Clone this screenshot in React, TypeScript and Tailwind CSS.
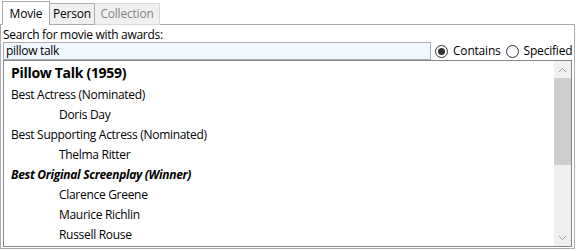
import React from "react";

const font = { fontFamily: '"Segoe UI", "Open Sans", "Noto Sans", sans-serif' };

function Radio({ checked, label }: { checked: boolean; label: string }) {
  return (
    <div className="flex items-center gap-[5px]">
      <div className="w-[13px] h-[13px] rounded-full border border-[#333333] bg-white flex items-center justify-center">
        {checked && <div className="w-[7px] h-[7px] rounded-full bg-[#333333]" />}
      </div>
      <span className="text-[12px] text-[#000000] tracking-[-0.2px]">{label}</span>
    </div>
  );
}

export default function App() {
  const rows: { text: string; kind: "cat" | "catw" | "person" }[] = [
    { text: "Best Actress (Nominated)", kind: "cat" },
    { text: "Doris Day", kind: "person" },
    { text: "Best Supporting Actress (Nominated)", kind: "cat" },
    { text: "Thelma Ritter", kind: "person" },
    { text: "Best Original Screenplay (Winner)", kind: "catw" },
    { text: "Clarence Greene", kind: "person" },
    { text: "Maurice Richlin", kind: "person" },
    { text: "Russell Rouse", kind: "person" },
  ];
  return (
    <div className="w-[576px] h-[251px] bg-white overflow-hidden text-black" style={font}>
      <div className="flex pl-[2px] pt-[2px] h-[25px] items-end">
        <div className="w-[48px] h-[24px] border border-[#acacac] border-b-0 bg-white text-[12px] flex items-center justify-center tracking-[-0.2px] relative z-10">
          Movie
        </div>
        <div className="w-[45px] h-[22px] border border-l-0 border-[#acacac] bg-[#f0f0f0] text-[12px] flex items-center justify-center tracking-[-0.2px]">
          Person
        </div>
        <div className="w-[65px] h-[22px] border border-l-0 border-[#d9d9d9] bg-[#f0f0f0] text-[12px] text-[#838383] flex items-center justify-center tracking-[-0.2px]">
          Collection
        </div>
      </div>
      <div className="border border-[#acacac] h-[225px] mt-[-1px] mr-[1px] flex flex-col px-[2px]">
        <div className="text-[12px] leading-[15px] pt-[2px] tracking-[-0.3px]">Search for movie with awards:</div>
        <div className="flex items-center h-[18px]">
          <div className="w-[428px] h-[18px] border border-[#abadb3] bg-[#f1f7fe] text-[12px] leading-[16px] px-[2px] tracking-[-0.3px] shrink-0">
            pillow talk
          </div>
          <div className="flex items-center gap-[5px] ml-[4px]">
            <Radio checked label="Contains" />
            <Radio checked={false} label="Specified" />
          </div>
        </div>
        <div className="flex-1 border border-[#828790] flex mb-[1px]">
          <div className="flex-1 flex flex-col pl-[7px] pt-[1px]">
            <div className="text-[14px] font-bold leading-[22px] tracking-[-0.3px]">Pillow Talk (1959)</div>
            <div className="h-[1px]" />
            {rows.map((r, i) => (
              <div
                key={i}
                className={
                  "text-[12px] leading-[20px] tracking-[-0.3px] " +
                  (r.kind === "person" ? "pl-[48px]" : "") +
                  (r.kind === "catw" ? "font-bold italic" : "")
                }
              >
                {r.text}
              </div>
            ))}
          </div>
          <div className="w-[17px] bg-[#f0f0f0] flex flex-col items-center">
            <div className="h-[17px] w-full flex items-center justify-center">
              <svg width="9" height="6" viewBox="0 0 9 6">
                <path d="M1 5 L4.5 1.5 L8 5" stroke="#a0a0a0" strokeWidth="1" fill="none" />
              </svg>
            </div>
            <div className="h-[87px] w-full bg-[#cdcdcd]" />
            <div className="flex-1" />
            <div className="h-[17px] w-full flex items-center justify-center">
              <svg width="9" height="6" viewBox="0 0 9 6">
                <path d="M1 1 L4.5 4.5 L8 1" stroke="#a0a0a0" strokeWidth="1" fill="none" />
              </svg>
            </div>
          </div>
        </div>
      </div>
    </div>
  );
}
